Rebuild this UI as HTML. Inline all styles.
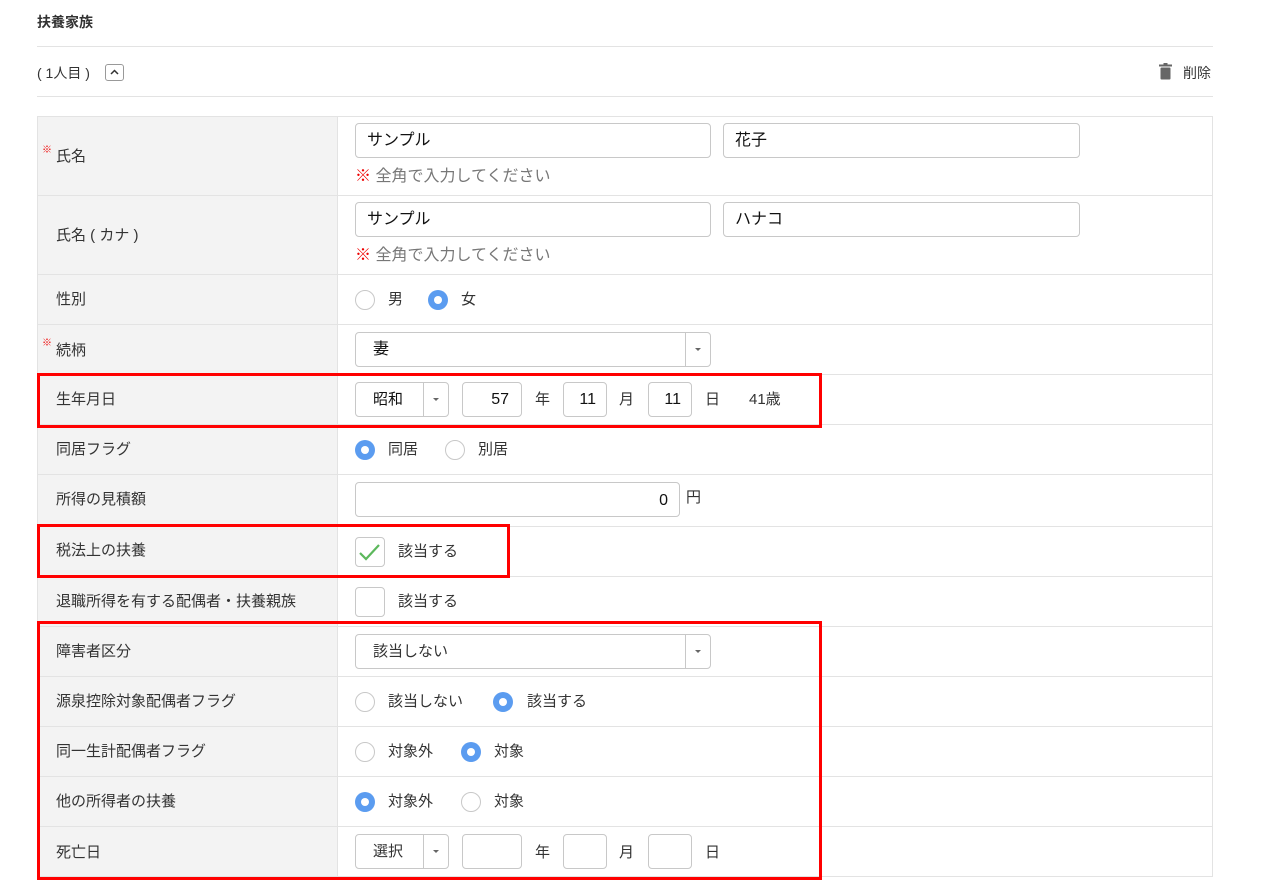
<!DOCTYPE html>
<html><head><meta charset="utf-8"><style>
*{box-sizing:border-box;margin:0;padding:0}
body{width:1261px;height:893px;background:#fff;font-family:"Liberation Sans","Noto Sans CJK JP",sans-serif;color:#333;position:relative;overflow:hidden}
.a{position:absolute}
.t{position:absolute;font-size:15px;line-height:20px;white-space:nowrap}
.hl{position:absolute;left:37px;width:1176px;height:1px;background:#e3e3e3}
.box{position:absolute;border:1px solid #c8c8c8;border-radius:4px;background:#fff;font-size:16px;color:#111;display:flex;align-items:center;line-height:20px}
.box.rt{justify-content:flex-end}
.r{position:absolute;width:20px;height:20px;border:1px solid #c8c8c8;border-radius:50%;background:#fff}
.r.on{border:none;background:#5b9cf0}
.r.on::after{content:"";position:absolute;left:6px;top:6px;width:8px;height:8px;border-radius:50%;background:#fff}
.red{position:absolute;border:3px solid #f00}
.dd{position:absolute;top:0;bottom:0;width:1px;background:#c8c8c8}
.car{position:absolute;width:0;height:0;border-left:3px solid transparent;border-right:3px solid transparent;border-top:3px solid #666}
.hint{position:absolute;font-size:16px;color:#777;line-height:20px;white-space:nowrap}
.hint b{color:#e00;font-weight:normal}
.lab{position:absolute;left:56px;font-size:15px;line-height:20px;color:#333;white-space:nowrap}
.req{position:absolute;left:42px;font-size:10px;color:#e00;line-height:10px}
</style></head><body>
<div class="t" style="left:37px;top:12px;font-weight:bold;font-size:14px">扶養家族</div>
<div class="hl" style="top:46px"></div>
<div class="t" style="left:37px;top:63px;font-size:14px">( 1人目 )</div>
<div class="a" style="left:105px;top:64px;width:19px;height:17px;border:1px solid #999;border-radius:3px"><svg width="17" height="15" style="position:absolute;left:0;top:0"><path d="M5 9 L8.5 5.5 L12 9" fill="none" stroke="#333" stroke-width="1.5"/></svg></div>
<svg class="a" style="left:1159px;top:63px" width="13" height="17"><rect x="0" y="1.5" width="13" height="2" fill="#666"/><rect x="4.5" y="0" width="4" height="2" fill="#666"/><rect x="1.5" y="4.5" width="10" height="12" rx="1" fill="#666"/></svg>
<div class="t" style="left:1183px;top:63px;font-size:14px">削除</div>
<div class="hl" style="top:96px"></div>

<div class="a" style="left:37px;top:116px;width:1176px;height:761px;border:1px solid #e3e3e3;border-bottom:none"></div>
<div class="a" style="left:38px;top:117px;width:299px;height:759px;background:#f3f3f3"></div>
<div class="a" style="left:337px;top:116px;width:1px;height:761px;background:#e3e3e3"></div>
<div class="hl" style="top:195px"></div>
<div class="hl" style="top:274px"></div>
<div class="hl" style="top:324px"></div>
<div class="hl" style="top:374px"></div>
<div class="hl" style="top:424px"></div>
<div class="hl" style="top:474px"></div>
<div class="hl" style="top:526px"></div>
<div class="hl" style="top:576px"></div>
<div class="hl" style="top:626px"></div>
<div class="hl" style="top:676px"></div>
<div class="hl" style="top:726px"></div>
<div class="hl" style="top:776px"></div>
<div class="hl" style="top:826px"></div>
<div class="hl" style="top:876px"></div>

<div class="req" style="top:146px">※</div><div class="lab" style="top:147px">氏名</div>
<div class="lab" style="top:226px">氏名 ( カナ )</div>
<div class="lab" style="top:290px">性別</div>
<div class="req" style="top:339px">※</div><div class="lab" style="top:341px">続柄</div>
<div class="lab" style="top:390px">生年月日</div>
<div class="lab" style="top:440px">同居フラグ</div>
<div class="lab" style="top:490px">所得の見積額</div>
<div class="lab" style="top:541px">税法上の扶養</div>
<div class="lab" style="top:592px">退職所得を有する配偶者・扶養親族</div>
<div class="lab" style="top:642px">障害者区分</div>
<div class="lab" style="top:692px">源泉控除対象配偶者フラグ</div>
<div class="lab" style="top:742px">同一生計配偶者フラグ</div>
<div class="lab" style="top:792px">他の所得者の扶養</div>
<div class="lab" style="top:843px">死亡日</div>

<div class="box" style="left:355px;top:123px;width:356px;height:35px;padding-left:11px">サンプル</div>
<div class="box" style="left:723px;top:123px;width:357px;height:35px;padding-left:11px">花子</div>
<div class="hint" style="left:355px;top:167px"><b>※</b> 全角で入力してください</div>
<div class="box" style="left:355px;top:202px;width:356px;height:35px;padding-left:11px">サンプル</div>
<div class="box" style="left:723px;top:202px;width:357px;height:35px;padding-left:11px">ハナコ</div>
<div class="hint" style="left:355px;top:246px"><b>※</b> 全角で入力してください</div>

<div class="r" style="left:355px;top:290px"></div><div class="t" style="left:388px;top:290px">男</div>
<div class="r on" style="left:428px;top:290px"></div><div class="t" style="left:461px;top:290px">女</div>

<div class="box" style="left:355px;top:332px;width:356px;height:35px;padding-left:17px">妻<div class="dd" style="right:24px"></div><div class="car" style="right:9px;top:15px"></div></div>

<div class="box" style="left:355px;top:382px;width:94px;height:35px;padding-left:17px;font-size:15px">昭和<div class="dd" style="right:24px"></div><div class="car" style="right:9px;top:15px"></div></div>
<div class="box rt" style="left:462px;top:382px;width:60px;height:35px;padding-right:12px">57</div>
<div class="t" style="left:535px;top:390px">年</div>
<div class="box rt" style="left:563px;top:382px;width:44px;height:35px;padding-right:10px">11</div>
<div class="t" style="left:619px;top:390px">月</div>
<div class="box rt" style="left:648px;top:382px;width:44px;height:35px;padding-right:10px">11</div>
<div class="t" style="left:705px;top:390px">日</div>
<div class="t" style="left:749px;top:390px">41歳</div>

<div class="r on" style="left:355px;top:440px"></div><div class="t" style="left:388px;top:440px">同居</div>
<div class="r" style="left:445px;top:440px"></div><div class="t" style="left:478px;top:440px">別居</div>

<div class="box rt" style="left:355px;top:482px;width:325px;height:35px;padding-right:11px;padding-top:3px">0</div>
<div class="t" style="left:686px;top:488px">円</div>

<div class="box" style="left:355px;top:537px;width:30px;height:30px"><svg width="28" height="28" style="position:absolute;left:0;top:0"><path d="M4 15 L10 21 L23 7" fill="none" stroke="#5cb85c" stroke-width="2.2"/></svg></div>
<div class="t" style="left:398px;top:542px">該当する</div>
<div class="box" style="left:355px;top:587px;width:30px;height:30px"></div>
<div class="t" style="left:398px;top:592px">該当する</div>

<div class="box" style="left:355px;top:634px;width:356px;height:35px;padding-left:17px;font-size:15px;color:#333">該当しない<div class="dd" style="right:24px"></div><div class="car" style="right:9px;top:15px"></div></div>
<div class="r" style="left:355px;top:692px"></div><div class="t" style="left:388px;top:692px">該当しない</div>
<div class="r on" style="left:493px;top:692px"></div><div class="t" style="left:527px;top:692px">該当する</div>
<div class="r" style="left:355px;top:742px"></div><div class="t" style="left:388px;top:742px">対象外</div>
<div class="r on" style="left:461px;top:742px"></div><div class="t" style="left:494px;top:742px">対象</div>
<div class="r on" style="left:355px;top:792px"></div><div class="t" style="left:388px;top:792px">対象外</div>
<div class="r" style="left:461px;top:792px"></div><div class="t" style="left:494px;top:792px">対象</div>

<div class="box" style="left:355px;top:834px;width:94px;height:35px;padding-left:17px;font-size:15px;color:#333">選択<div class="dd" style="right:24px"></div><div class="car" style="right:9px;top:15px"></div></div>
<div class="box" style="left:462px;top:834px;width:60px;height:35px"></div>
<div class="t" style="left:535px;top:843px">年</div>
<div class="box" style="left:563px;top:834px;width:44px;height:35px"></div>
<div class="t" style="left:619px;top:843px">月</div>
<div class="box" style="left:648px;top:834px;width:44px;height:35px"></div>
<div class="t" style="left:705px;top:843px">日</div>

<div class="red" style="left:37px;top:373px;width:785px;height:55px"></div>
<div class="red" style="left:37px;top:524px;width:473px;height:54px"></div>
<div class="red" style="left:37px;top:621px;width:785px;height:259px"></div>
</body></html>
